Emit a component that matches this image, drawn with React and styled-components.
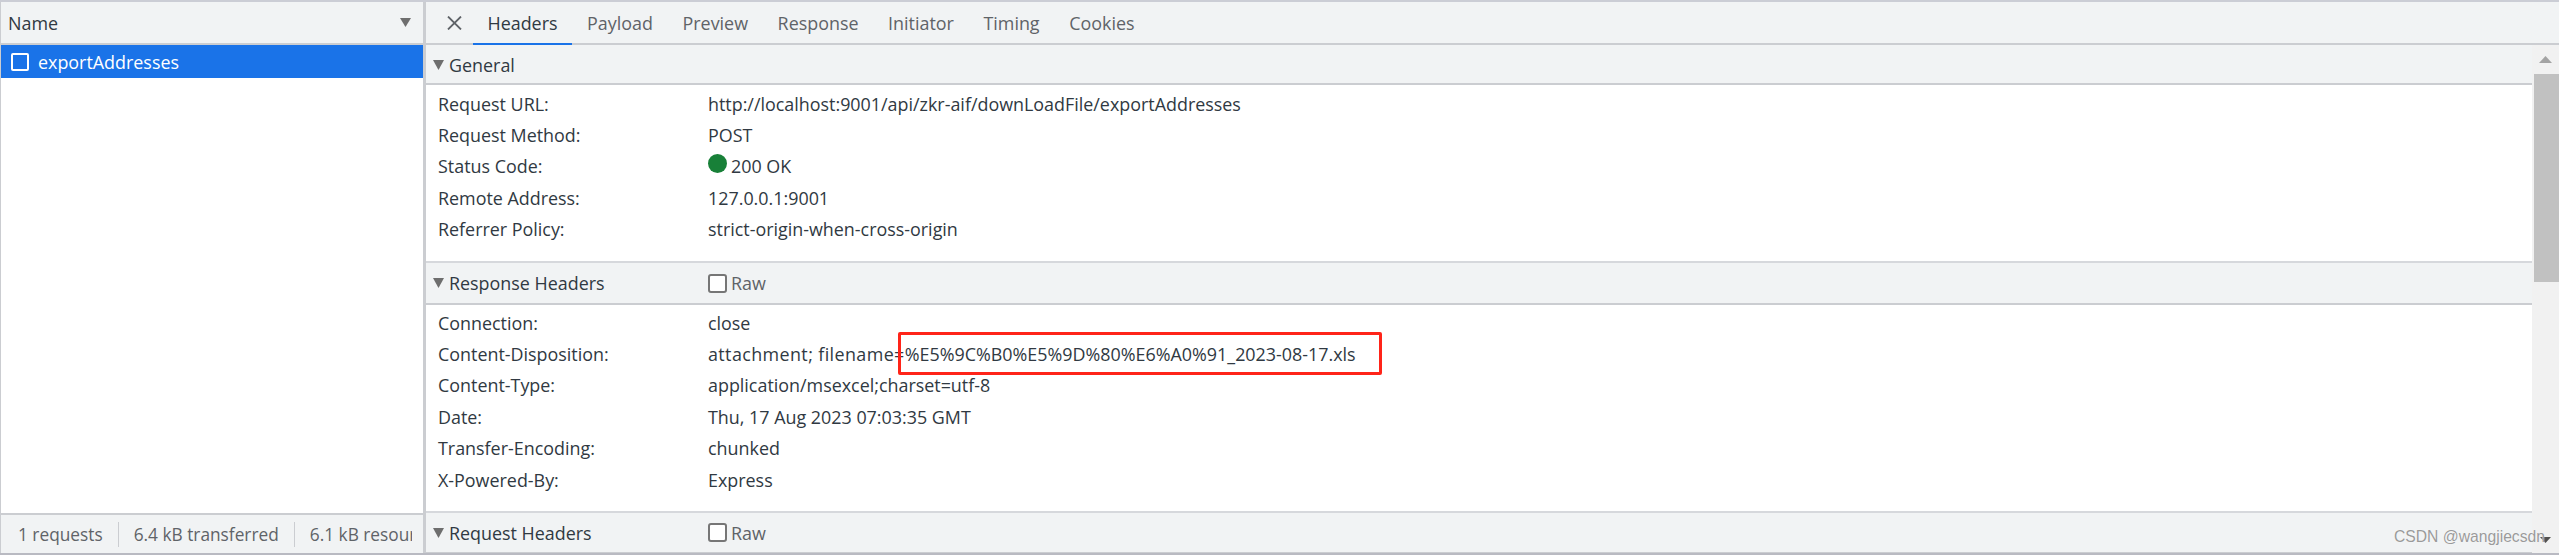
import React from 'react'
import styled, { createGlobalStyle } from 'styled-components'

const GlobalStyle = createGlobalStyle`
    html, body {
        margin: 0;
        padding: 0;
        background: #fff;
        overflow: hidden;
    }
`

const Page = styled.div`
    position: relative;
    width: 2559px;
    height: 555px;
    box-sizing: border-box;
    display: grid;
    grid-template-columns: 423px 3px 1fr;
    border-top: 2px solid #cbcdd5;
    border-bottom: 2px solid #b9bac2;
    font-family: "Open Sans", "Noto Sans", sans-serif;
    font-size: 17.9px;
    color: #303942;
    overflow: hidden;
`

const Divider = styled.div`
    background: #cbcdd1;
`

const LeftPanel = styled.div`
    display: flex;
    flex-direction: column;
    min-width: 0;
    border-left: 1px solid #cbcdd1;
`

const NameHeader = styled.div`
    height: 41px;
    display: flex;
    align-items: center;
    justify-content: space-between;
    padding: 0 12px 0 7px;
    background: #f1f3f4;
    border-bottom: 2px solid #cbcdd1;
    color: #303942;
`

const SelectedRow = styled.div`
    height: 33px;
    display: flex;
    align-items: center;
    gap: 9px;
    padding-left: 10px;
    background: #1a73e8;
    color: #fff;
`

const FileBox = styled.span`
    width: 14px;
    height: 14px;
    border: 2px solid #fff;
    border-radius: 2px;
`

const Spacer = styled.div`
    flex: 1;
`

const StatusBar = styled.div`
    height: 39px;
    display: flex;
    align-items: center;
    padding-left: 17px;
    background: #f1f3f4;
    border-top: 2px solid #cbcdd1;
    font-size: 17.3px;
    color: #5f6368;
    white-space: nowrap;
    overflow: hidden;
`

const StatusItem = styled.span`
    display: flex;
    align-items: center;
    height: 25px;
    padding-right: 15px;
    margin-right: 15px;
    border-right: 1px solid #cbcdd1;

    &:last-child {
        width: 102px;
        padding-right: 0;
        margin-right: 0;
        border-right: none;
        overflow: hidden;
    }
`

const RightPanel = styled.div`
    display: flex;
    flex-direction: column;
    min-width: 0;
`

const TabBar = styled.div`
    height: 41px;
    display: flex;
    align-items: stretch;
    background: #f1f3f4;
    border-bottom: 2px solid #cbcdd1;
`

const CloseButton = styled.div`
    width: 46.7px;
    display: flex;
    align-items: center;
    justify-content: center;
    padding-left: 11px;
    box-sizing: border-box;
    color: #5f6368;
`

const Tab = styled.div`
    display: flex;
    align-items: center;
    padding: 0 14.8px;
    margin-bottom: -2px;
    color: ${props => (props.$active ? '#303942' : '#5f6368')};
    border-bottom: 2px solid ${props => (props.$active ? '#1a73e8' : 'transparent')};
`

const Content = styled.div`
    flex: 1;
    display: flex;
    min-height: 0;
`

const Sections = styled.div`
    flex: 1;
    min-width: 0;
    display: flex;
    flex-direction: column;
`

const SectionHeader = styled.div`
    height: ${props => props.$height}px;
    box-sizing: border-box;
    display: grid;
    grid-template-columns: 275px auto 1fr;
    align-items: center;
    padding: ${props => (props.$first ? '2px' : '0')} 0 0 7px;
    background: #f1f3f4;
    border-top: ${props => (props.$first ? 'none' : '2px solid #d6d8dc')};
    border-bottom: 2px solid #cbcdd1;
`

const SectionTitle = styled.div`
    display: flex;
    align-items: center;
    gap: 5px;
`

const Triangle = styled.svg`
    display: block;
    flex: none;
`

const RawToggle = styled.div`
    display: flex;
    align-items: center;
    gap: 4px;
    color: #5f6368;
`

const CheckBox = styled.span`
    width: 15px;
    height: 15px;
    border: 2px solid #767676;
    border-radius: 3px;
    background: #fff;
`

const Rows = styled.div`
    height: ${props => props.$height}px;
    box-sizing: border-box;
    padding-top: ${props => props.$top}px;
`

const Row = styled.div`
    height: 31.4px;
    display: grid;
    grid-template-columns: 270px 1fr;
    align-items: center;
    padding-left: 12px;
    white-space: nowrap;
`

const Value = styled.div`
    display: flex;
    align-items: center;
`

const StatusDot = styled.span`
    width: 19px;
    height: 19px;
    margin: -6px 4px 0 0;
    border-radius: 50%;
    background: #188038;
`

const Prefix = styled.span`
    letter-spacing: 0.4px;
`

const Highlight = styled.span`
    position: relative;

    &::after {
        content: '';
        position: absolute;
        left: -7px;
        right: -26px;
        top: -10px;
        bottom: -9px;
        border: 3px solid #ff2419;
        border-radius: 2px;
    }
`

const ScrollBar = styled.div`
    width: 27px;
    flex: none;
    display: flex;
    flex-direction: column;
    align-items: flex-end;
    background: #f1f1f1;
`

const ScrollArrow = styled.div`
    width: 100%;
    height: 29px;
    display: flex;
    justify-content: center;
    align-items: center;
`

const ScrollThumb = styled.div`
    width: 25px;
    height: 208px;
    background: #c1c1c1;
`

const Watermark = styled.div`
    position: absolute;
    right: 14px;
    bottom: 7px;
    font-family: "Liberation Sans", sans-serif;
    font-size: 15.7px;
    color: #9a9a9a;
    text-shadow: 0 0 1px #fff;
`

const SectionTriangle = () => (
    <Triangle width="11" height="10" viewBox="0 0 11 10">
        <path d="M0 0h11L5.5 10z" fill="#6e6e6e" />
    </Triangle>
)

const generalRows = [
    ['Request URL:', 'http://localhost:9001/api/zkr-aif/downLoadFile/exportAddresses'],
    ['Request Method:', 'POST'],
    ['Status Code:', '200 OK', true],
    ['Remote Address:', '127.0.0.1:9001'],
    ['Referrer Policy:', 'strict-origin-when-cross-origin'],
]

const responseRows = [
    ['Connection:', 'close'],
    ['Content-Type:', 'application/msexcel;charset=utf-8'],
    ['Date:', 'Thu, 17 Aug 2023 07:03:35 GMT'],
    ['Transfer-Encoding:', 'chunked'],
    ['X-Powered-By:', 'Express'],
]

const tabs = ['Headers', 'Payload', 'Preview', 'Response', 'Initiator', 'Timing', 'Cookies']

const App = () => {
    return (
        <React.Fragment>
            <GlobalStyle />
            <Page>
                <LeftPanel>
                    <NameHeader>
                        Name
                        <Triangle width="11" height="9" viewBox="0 0 11 9">
                            <path d="M0 0h11L5.5 9z" fill="#6e6e6e" />
                        </Triangle>
                    </NameHeader>
                    <SelectedRow>
                        <FileBox />
                        exportAddresses
                    </SelectedRow>
                    <Spacer />
                    <StatusBar>
                        <StatusItem>1 requests</StatusItem>
                        <StatusItem>6.4 kB transferred</StatusItem>
                        <StatusItem>6.1 kB resources</StatusItem>
                    </StatusBar>
                </LeftPanel>
                <Divider />
                <RightPanel>
                    <TabBar>
                        <CloseButton>
                            <svg width="15" height="14" viewBox="0 0 15 14">
                                <path d="M1 0.5l13 13M14 0.5l-13 13" stroke="#5f6368" strokeWidth="1.8" fill="none" />
                            </svg>
                        </CloseButton>
                        {tabs.map((tab, i) => (
                            <Tab key={tab} $active={i === 0}>{tab}</Tab>
                        ))}
                    </TabBar>
                    <Content>
                        <Sections>
                            <SectionHeader $first $height={40}>
                                <SectionTitle><SectionTriangle />General</SectionTitle>
                            </SectionHeader>
                            <Rows $height={176} $top={3}>
                                {generalRows.map(([label, value, dot]) => (
                                    <Row key={label}>
                                        <span>{label}</span>
                                        <Value>{dot && <StatusDot />}{value}</Value>
                                    </Row>
                                ))}
                            </Rows>
                            <SectionHeader $height={44}>
                                <SectionTitle><SectionTriangle />Response Headers</SectionTitle>
                                <RawToggle><CheckBox />Raw</RawToggle>
                            </SectionHeader>
                            <Rows $height={206} $top={2}>
                                {responseRows.slice(0, 1).map(([label, value]) => (
                                    <Row key={label}>
                                        <span>{label}</span>
                                        <Value>{value}</Value>
                                    </Row>
                                ))}
                                <Row>
                                    <span>Content-Disposition:</span>
                                    <Value>
                                        <Prefix>attachment; filename=</Prefix>
                                        <Highlight>%E5%9C%B0%E5%9D%80%E6%A0%91_2023-08-17.xls</Highlight>
                                    </Value>
                                </Row>
                                {responseRows.slice(1).map(([label, value]) => (
                                    <Row key={label}>
                                        <span>{label}</span>
                                        <Value>{value}</Value>
                                    </Row>
                                ))}
                            </Rows>
                            <SectionHeader $height={43}>
                                <SectionTitle><SectionTriangle />Request Headers</SectionTitle>
                                <RawToggle><CheckBox />Raw</RawToggle>
                            </SectionHeader>
                        </Sections>
                        <ScrollBar>
                            <ScrollArrow>
                                <svg width="13" height="7" viewBox="0 0 13 7"><path d="M6.5 0L13 7H0z" fill="#a3a3a3" /></svg>
                            </ScrollArrow>
                            <ScrollThumb />
                            <Spacer />
                            <ScrollArrow>
                                <svg width="11" height="6" viewBox="0 0 11 6"><path d="M0 0h11L5.5 6z" fill="#505050" /></svg>
                            </ScrollArrow>
                        </ScrollBar>
                    </Content>
                </RightPanel>
                <Watermark>CSDN @wangjiecsdn</Watermark>
            </Page>
        </React.Fragment>
    )
}

export default App
